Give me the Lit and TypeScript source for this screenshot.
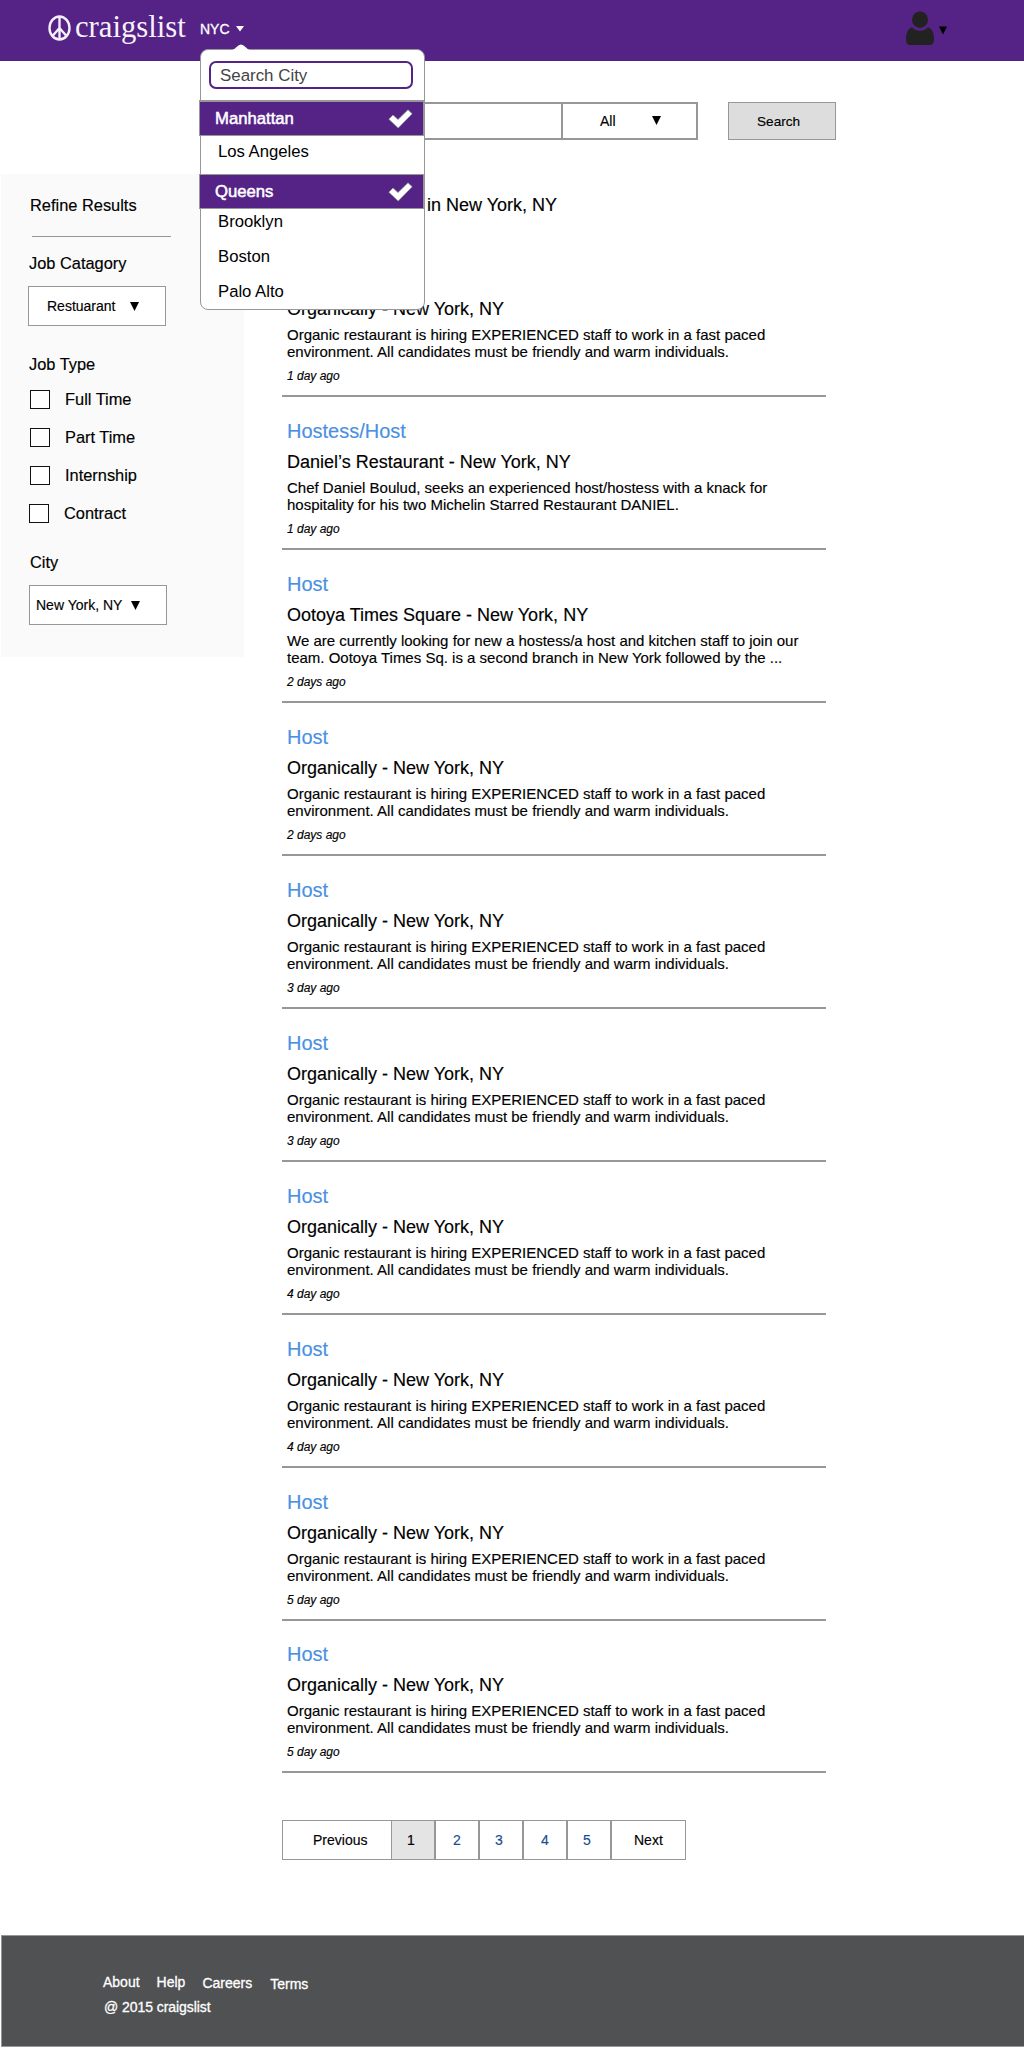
import { LitElement, html, css, svg } from "lit";
import { customElement } from "lit/decorators.js";

interface Job {
  title: string;
  company: string;
  lines: [string, string];
  age: string;
}

const organic = (age: string): Job => ({
  title: "Host",
  company: "Organically - New York, NY",
  lines: [
    "Organic restaurant is hiring EXPERIENCED staff to work in a fast paced",
    "environment. All candidates must be friendly and warm individuals.",
  ],
  age,
});

const jobs: Job[] = [
  organic("1 day ago"),
  {
    title: "Hostess/Host",
    company: "Daniel’s Restaurant - New York, NY",
    lines: [
      "Chef Daniel Boulud, seeks an experienced host/hostess with a knack for",
      "hospitality for his two Michelin Starred Restaurant DANIEL.",
    ],
    age: "1 day ago",
  },
  {
    title: "Host",
    company: "Ootoya Times Square - New York, NY",
    lines: [
      "We are currently looking for new a hostess/a host and kitchen staff to join our",
      "team. Ootoya Times Sq. is a second branch in New York followed by the ...",
    ],
    age: "2 days ago",
  },
  organic("2 days ago"),
  organic("3 day ago"),
  organic("3 day ago"),
  organic("4 day ago"),
  organic("4 day ago"),
  organic("5 day ago"),
  organic("5 day ago"),
];

const triangle = (cls = "") => html`<svg class="tri ${cls}" viewBox="0 0 9 9">
  ${svg`<path d="M0 0H9L4.5 9Z" fill="currentColor" />`}
</svg>`;

@customElement("city-menu")
export class CityMenu extends LitElement {
  static styles = css`
    :host { display: block; position: relative; width: 225px; height: 261px;
      font: 16.7px/20px "Liberation Sans", Arial, sans-serif; color: #000; }
    .panel { box-sizing: border-box; width: 225px; height: 261px; background: #fff;
      border: 1px solid #979797; border-radius: 8px; padding-top: 11px; }
    .tip { position: absolute; left: 32px; top: -5px; width: 18px; height: 7px; display: block; }
    .search { box-sizing: border-box; width: 204px; height: 28px; margin-left: 8px;
      border: 2px solid #552286; border-radius: 7px; padding: 3px 0 0 9px;
      font-size: 16.9px; color: #444; }
    .row { box-sizing: border-box; display: flex; align-items: center; height: 35px; padding-left: 17px; }
    .la { height: 38px; padding-bottom: 7px; }
    .first { margin-top: 11px; }
    .after { padding-bottom: 10px; }
    .on { width: 226px; margin-left: -2px; padding: 0 10px 0 15px; background: #552286;
      border: solid #979797; border-width: 1px 2px 1px 1px; color: #fff;
      justify-content: space-between; -webkit-text-stroke: 0.5px #fff; }
    .first.on { height: 36px; border-top-width: 2px; }
    .check { width: 25px; height: 20px; }
  `;
  render() {
    const row = (name: string, cls: string) => html`
      <div class="row ${cls}">
        <span>${name}</span>
        ${cls.includes("on")
          ? html`<svg class="check" viewBox="0 0 25 20">
              <path d="M.8 10.200L5 6L10 10.600L20 .8L24.200 4.800L10.200 19Z" fill="#fff" stroke="#979797" stroke-width=".8" />
            </svg>`
          : ""}
      </div>`;
    return html`
      <div class="panel">
        <div class="search">Search City</div>
        ${row("Manhattan", "on first")} ${row("Los Angeles", "la")}
        ${row("Queens", "on")} ${row("Brooklyn", "after")}
        ${row("Boston", "after")} ${row("Palo Alto", "after")}
      </div>
      <svg class="tip" viewBox="0 0 18 7">
        <path d="M0 6Q2 5.500 4 3.500Q7 .5 9 .5Q11 .5 14 3.500Q16 5.500 18 6V7H0Z" fill="#fff" />
      </svg>`;
  }
}

@customElement("app-root")
export class AppRoot extends LitElement {
  static styles = css`
    :host { display: block; position: relative; width: 1024px; height: 2048px; overflow: hidden;
      background: #fff; color: #000; font: 14px/20px "Liberation Sans", Arial, sans-serif;
      font-kerning: normal; }
    * { box-sizing: border-box; }
    .tri { width: 9px; height: 9px; display: block; flex: none; }
    .header { display: flex; height: 61px; padding-left: 48px; background: #552286; color: #fff; }
    .peace { width: 23px; height: 26px; margin-top: 15px; flex: none; }
    .brand { font: 30.7px/36px "Liberation Serif", "Times New Roman", serif; margin: 9px 0 0 4px;
      width: 125px; white-space: nowrap; opacity: .95; }
    .place { display: flex; margin-top: 19px; width: 706px; height: 20px; -webkit-text-stroke: .3px #fff; }
    .caret { width: 8px; height: 6px; margin: 7px 0 0 6px; }
    .user { width: 28px; height: 34px; margin-top: 11px; }
    .usertri { width: 8px; margin: 26px 0 0 5px; color: #000; }
    .menu { position: absolute; left: 200px; top: 49px; z-index: 2; }

    .body { display: flex; height: 1874px; }
    .side { width: 243px; height: 483px; margin: 113px 0 0 1px; background: #fafafa;
      padding: 21px 0 0 28px; font-size: 16.4px; display: flex; flex-direction: column; align-items: flex-start; }
    .in1 { margin-left: 1px; }
    .rule { width: 139px; height: 1px; background: #979797; margin: 21px 0 0 3px; }
    .cat { margin-top: 16px; }
    .type { margin-top: 28px; }
    .select { display: flex; width: 138px; height: 40px; border: 1px solid #979797; background: #fff;
      font-size: 14px; padding-top: 9px; }
    .s1 { margin: 13px 0 0 -1px; padding-left: 18px; }
    .s2 { margin: 13px 0 0 0; padding-left: 6px; }
    .s1 .tri { margin: 6px 0 0 15px; }
    .s2 .tri { margin: 6px 0 0 9px; }
    .opt { display: flex; height: 20px; line-height: 19px; margin: 0 0 18px 1px; gap: 15px; }
    .opts { margin-top: 16px; }
    .opt:last-child { margin: 0; }
    .box { width: 20px; height: 19px; border: 1px solid #111; background: #fff; }
    .city { margin: 28px 0 0 1px; }

    .main { width: 554px; margin: 41px 0 0 38px; }
    .bar { display: flex; height: 38px; }
    .query { width: 281px; border: 2px solid #979797; background: #fff; }
    .kind { display: flex; width: 137px; margin-left: -2px; border: 2px solid #979797; padding: 7px 0 0 37px; }
    .kind span { width: 52px; }
    .kind .tri { margin-top: 5px; }
    .btn { width: 108px; margin-left: 30px; border: 1px solid #979797; background: #ddd;
      padding: 9px 0 0 28px; font-size: 13.6px; }
    .heading { font-size: 18px; margin: 55px 0 0; padding-left: 145px; font-weight: 400; height: 20px; }
    .list { margin-top: 29px; width: 544px; }
    .job { height: 153px; padding: 22px 0 0 5px; border-bottom: 2px solid #979797; white-space: nowrap; }
    .job:last-child { height: 152px; padding-top: 21px; }
    .title { font-size: 20px; line-height: 24px; color: #4a90e2; }
    .company { font-size: 18px; line-height: 20px; margin-top: 9px; }
    .desc { font-size: 15px; line-height: 17px; margin-top: 7px; }
    .age { font-size: 12px; line-height: 14px; margin-top: 9px; font-style: italic; }
    .pages { display: flex; margin-top: 47px; height: 40px; width: 404px; border: 1px solid #979797; }
    .page { width: 44px; border-left: 2px solid #979797; padding: 9px 0 0 16px; color: #1b4b8f; }
    .prev { width: 108px; border: 0; padding-left: 30px; color: #000; }
    .cur { width: 43px; border-left-width: 1px; padding-left: 15px; background: #e4e4e4; color: #000; }
    .next { flex: 1; padding-left: 22px; color: #000; }
    .odd { padding-left: 15px; }
    .far { padding-left: 17px; }
    .title, .company, .desc, .age, .side, .heading, .bar, .pages { -webkit-text-stroke: .15px currentColor; }

    .footer { height: 112px; margin-left: 1px; border: 1px solid #979797; border-right: 0;
      background: #505152; color: #fff; padding: 36px 0 0 101px; -webkit-text-stroke: .3px #fff; }
    .links { display: flex; height: 25px; }
    .links span { margin-right: 17px; }
    .links .l3 { padding-top: 1px; margin-right: 18px; }
    .l4 { padding-top: 2px; }
    .copy { padding-left: 1px; letter-spacing: -.06px; }
  `;

  render() {
    return html`
      <div class="header">
        <svg class="peace" viewBox="0 0 23 26" fill="none" stroke="#f4effa">
          <ellipse cx="11.5" cy="13" rx="10" ry="11.500" stroke-width="2.400" />
          <path d="M11.500 2V24M11.500 13L4.500 21M11.500 13L18.500 21" stroke-width="2.400" />
        </svg>
        <div class="brand">craigslist</div>
        <div class="place">
          NYC
          <svg class="caret" viewBox="0 0 8 6"><path d="M0 0H8L4 5.500Z" fill="#fff" /></svg>
        </div>
        <svg class="user" viewBox="0 0 28 34" fill="#222">
          <ellipse cx="14" cy="8.700" rx="8" ry="8.300" />
          <path d="M6 16.200C8 18.700 11 19.700 14 19.700S20 18.700 22 16.200C26 17.500 28 22 28 28C28 32.500 26.500 34 23 34H5C1.500 34 0 32.500 0 28C0 22 2 17.500 6 16.200Z" />
        </svg>
        ${triangle("usertri")}
      </div>
      <city-menu class="menu"></city-menu>

      <div class="body">
        <div class="side">
          <div class="in1">Refine Results</div>
          <div class="rule"></div>
          <div class="cat">Job Catagory</div>
          <div class="select s1"><span>Restuarant</span>${triangle()}</div>
          <div class="type">Job Type</div>
          <div class="opts">
            ${["Full Time", "Part Time", "Internship", "Contract"].map(
              (o) => html`<div class="opt"><span class="box"></span><span>${o}</span></div>`
            )}
          </div>
          <div class="city">City</div>
          <div class="select s2"><span>New York, NY</span>${triangle()}</div>
        </div>

        <div class="main">
          <div class="bar">
            <div class="query"></div>
            <div class="kind"><span>All</span>${triangle()}</div>
            <div class="btn">Search</div>
          </div>
          <div class="heading">in New York, NY</div>
          <div class="list">
            ${jobs.map(
              (j) => html`<div class="job">
                <div class="title">${j.title}</div>
                <div class="company">${j.company}</div>
                <div class="desc">${j.lines[0]}<br />${j.lines[1]}</div>
                <div class="age">${j.age}</div>
              </div>`
            )}
          </div>
          <div class="pages">
            <div class="page prev">Previous</div>
            <div class="page cur">1</div>
            <div class="page far">2</div>
            <div class="page odd">3</div>
            <div class="page far">4</div>
            <div class="page odd">5</div>
            <div class="page next">Next</div>
          </div>
        </div>
      </div>

      <div class="footer">
        <div class="links">
          <span>About</span><span>Help</span><span class="l3">Careers</span><span class="l4">Terms</span>
        </div>
        <div class="copy">@ 2015 craigslist</div>
      </div>
    `;
  }
}
